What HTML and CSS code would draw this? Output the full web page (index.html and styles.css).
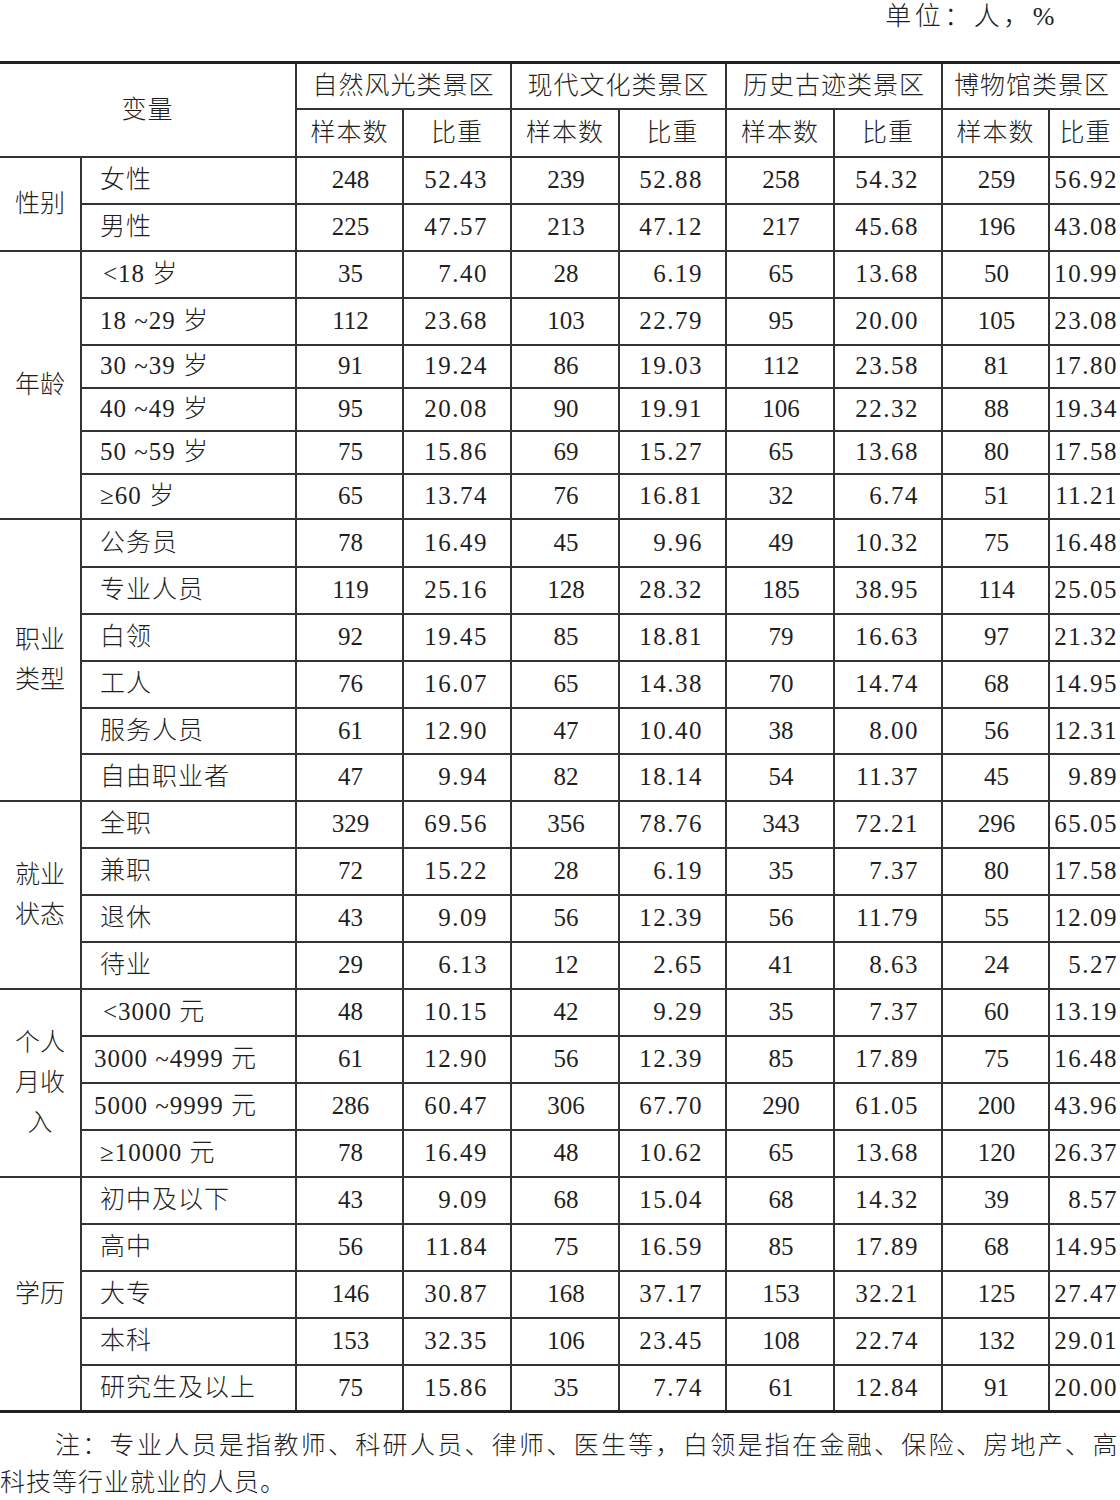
FILE: index.html
```html
<!DOCTYPE html>
<html lang="zh-CN">
<head>
<meta charset="utf-8">
<title>样本特征</title>
<link rel="stylesheet" href="styles.css">
</head>
<body>
<div class="page">
  <div class="unit">单位：人，%</div>
  <table class="data">
    <colgroup>
      <col class="c-grp"><col class="c-lbl">
      <col class="c-a"><col class="c-b">
      <col class="c-b"><col class="c-a">
      <col class="c-b"><col class="c-b">
      <col class="c-a"><col class="c-last">
    </colgroup>
    <thead>
      <tr class="h1">
        <th colspan="2" rowspan="2" class="hvar">变量</th>
        <th colspan="2">自然风光类景区</th>
        <th colspan="2">现代文化类景区</th>
        <th colspan="2">历史古迹类景区</th>
        <th colspan="2" class="last">博物馆类景区</th>
      </tr>
      <tr class="h2">
        <th>样本数</th><th>比重</th>
        <th>样本数</th><th>比重</th>
        <th>样本数</th><th>比重</th>
        <th>样本数</th><th class="last">比重</th>
      </tr>
    </thead>
    <tbody>
      <tr><td class="grp" rowspan="2">性别</td><td class="lbl">女性</td><td class="n">248</td><td class="r">52.43</td><td class="n">239</td><td class="r">52.88</td><td class="n">258</td><td class="r">54.32</td><td class="n">259</td><td class="r last">56.92</td></tr>
      <tr><td class="lbl">男性</td><td class="n">225</td><td class="r">47.57</td><td class="n">213</td><td class="r">47.12</td><td class="n">217</td><td class="r">45.68</td><td class="n">196</td><td class="r last">43.08</td></tr>

      <tr><td class="grp" rowspan="6">年龄</td><td class="lbl lt">&lt;18 岁</td><td class="n">35</td><td class="r">7.40</td><td class="n">28</td><td class="r">6.19</td><td class="n">65</td><td class="r">13.68</td><td class="n">50</td><td class="r last">10.99</td></tr>
      <tr><td class="lbl">18 ~29 岁</td><td class="n">112</td><td class="r">23.68</td><td class="n">103</td><td class="r">22.79</td><td class="n">95</td><td class="r">20.00</td><td class="n">105</td><td class="r last">23.08</td></tr>
      <tr class="short"><td class="lbl">30 ~39 岁</td><td class="n">91</td><td class="r">19.24</td><td class="n">86</td><td class="r">19.03</td><td class="n">112</td><td class="r">23.58</td><td class="n">81</td><td class="r last">17.80</td></tr>
      <tr class="short"><td class="lbl">40 ~49 岁</td><td class="n">95</td><td class="r">20.08</td><td class="n">90</td><td class="r">19.91</td><td class="n">106</td><td class="r">22.32</td><td class="n">88</td><td class="r last">19.34</td></tr>
      <tr class="short"><td class="lbl">50 ~59 岁</td><td class="n">75</td><td class="r">15.86</td><td class="n">69</td><td class="r">15.27</td><td class="n">65</td><td class="r">13.68</td><td class="n">80</td><td class="r last">17.58</td></tr>
      <tr class="mid"><td class="lbl">≥60 岁</td><td class="n">65</td><td class="r">13.74</td><td class="n">76</td><td class="r">16.81</td><td class="n">32</td><td class="r">6.74</td><td class="n">51</td><td class="r last">11.21</td></tr>

      <tr class="tall"><td class="grp" rowspan="6">职业类型</td><td class="lbl">公务员</td><td class="n">78</td><td class="r">16.49</td><td class="n">45</td><td class="r">9.96</td><td class="n">49</td><td class="r">10.32</td><td class="n">75</td><td class="r last">16.48</td></tr>
      <tr><td class="lbl">专业人员</td><td class="n">119</td><td class="r">25.16</td><td class="n">128</td><td class="r">28.32</td><td class="n">185</td><td class="r">38.95</td><td class="n">114</td><td class="r last">25.05</td></tr>
      <tr><td class="lbl">白领</td><td class="n">92</td><td class="r">19.45</td><td class="n">85</td><td class="r">18.81</td><td class="n">79</td><td class="r">16.63</td><td class="n">97</td><td class="r last">21.32</td></tr>
      <tr><td class="lbl">工人</td><td class="n">76</td><td class="r">16.07</td><td class="n">65</td><td class="r">14.38</td><td class="n">70</td><td class="r">14.74</td><td class="n">68</td><td class="r last">14.95</td></tr>
      <tr class="mid2"><td class="lbl">服务人员</td><td class="n">61</td><td class="r">12.90</td><td class="n">47</td><td class="r">10.40</td><td class="n">38</td><td class="r">8.00</td><td class="n">56</td><td class="r last">12.31</td></tr>
      <tr><td class="lbl">自由职业者</td><td class="n">47</td><td class="r">9.94</td><td class="n">82</td><td class="r">18.14</td><td class="n">54</td><td class="r">11.37</td><td class="n">45</td><td class="r last">9.89</td></tr>

      <tr><td class="grp" rowspan="4">就业状态</td><td class="lbl">全职</td><td class="n">329</td><td class="r">69.56</td><td class="n">356</td><td class="r">78.76</td><td class="n">343</td><td class="r">72.21</td><td class="n">296</td><td class="r last">65.05</td></tr>
      <tr><td class="lbl">兼职</td><td class="n">72</td><td class="r">15.22</td><td class="n">28</td><td class="r">6.19</td><td class="n">35</td><td class="r">7.37</td><td class="n">80</td><td class="r last">17.58</td></tr>
      <tr><td class="lbl">退休</td><td class="n">43</td><td class="r">9.09</td><td class="n">56</td><td class="r">12.39</td><td class="n">56</td><td class="r">11.79</td><td class="n">55</td><td class="r last">12.09</td></tr>
      <tr><td class="lbl">待业</td><td class="n">29</td><td class="r">6.13</td><td class="n">12</td><td class="r">2.65</td><td class="n">41</td><td class="r">8.63</td><td class="n">24</td><td class="r last">5.27</td></tr>

      <tr><td class="grp" rowspan="4">个人月收入</td><td class="lbl lt">&lt;3000 元</td><td class="n">48</td><td class="r">10.15</td><td class="n">42</td><td class="r">9.29</td><td class="n">35</td><td class="r">7.37</td><td class="n">60</td><td class="r last">13.19</td></tr>
      <tr><td class="lbl tight">3000 ~4999 元</td><td class="n">61</td><td class="r">12.90</td><td class="n">56</td><td class="r">12.39</td><td class="n">85</td><td class="r">17.89</td><td class="n">75</td><td class="r last">16.48</td></tr>
      <tr><td class="lbl tight">5000 ~9999 元</td><td class="n">286</td><td class="r">60.47</td><td class="n">306</td><td class="r">67.70</td><td class="n">290</td><td class="r">61.05</td><td class="n">200</td><td class="r last">43.96</td></tr>
      <tr><td class="lbl">≥10000 元</td><td class="n">78</td><td class="r">16.49</td><td class="n">48</td><td class="r">10.62</td><td class="n">65</td><td class="r">13.68</td><td class="n">120</td><td class="r last">26.37</td></tr>

      <tr><td class="grp" rowspan="5">学历</td><td class="lbl">初中及以下</td><td class="n">43</td><td class="r">9.09</td><td class="n">68</td><td class="r">15.04</td><td class="n">68</td><td class="r">14.32</td><td class="n">39</td><td class="r last">8.57</td></tr>
      <tr><td class="lbl">高中</td><td class="n">56</td><td class="r">11.84</td><td class="n">75</td><td class="r">16.59</td><td class="n">85</td><td class="r">17.89</td><td class="n">68</td><td class="r last">14.95</td></tr>
      <tr><td class="lbl">大专</td><td class="n">146</td><td class="r">30.87</td><td class="n">168</td><td class="r">37.17</td><td class="n">153</td><td class="r">32.21</td><td class="n">125</td><td class="r last">27.47</td></tr>
      <tr><td class="lbl">本科</td><td class="n">153</td><td class="r">32.35</td><td class="n">106</td><td class="r">23.45</td><td class="n">108</td><td class="r">22.74</td><td class="n">132</td><td class="r last">29.01</td></tr>
      <tr><td class="lbl">研究生及以上</td><td class="n">75</td><td class="r">15.86</td><td class="n">35</td><td class="r">7.74</td><td class="n">61</td><td class="r">12.84</td><td class="n">91</td><td class="r last">20.00</td></tr>
    </tbody>
  </table>
  <p class="note"><span class="note-first">注：专业人员是指教师、科研人员、律师、医生等，白领是指在金融、保险、房地产、高</span><br>科技等行业就业的人员。</p>
</div>
</body>
</html>
```

FILE: styles.css
```css
html, body {
  margin: 0;
  padding: 0;
  background: #ffffff;
}

body {
  font-family: "Liberation Serif", "Noto Sans CJK SC", serif;
  color: #1f1f1f;
  font-weight: 300;
}

.page {
  width: 1120px;
  overflow: hidden;
}

.unit {
  height: 34px;
  line-height: 34px;
  font-size: 26px;
  letter-spacing: 3.5px;
  text-align: right;
  padding-right: 62px;
  margin-bottom: 27px;
}

.data {
  width: 1120px;
  table-layout: fixed;
  border-collapse: collapse;
  font-size: 25px;
  border-top: 3px solid #222;
  border-bottom: 3px solid #222;
}

.c-grp { width: 81px; }
.c-lbl { width: 215px; }
.c-a { width: 107px; }
.c-b { width: 108px; }
.c-last { width: 72px; }

.data th,
.data td {
  border: 2px solid #333;
  padding: 0;
  line-height: 1.2;
  vertical-align: middle;
  white-space: nowrap;
}

.data tr > :first-child {
  border-left: none;
}

.data .last {
  border-right: none;
}

.data th {
  font-weight: 300;
  text-align: center;
  letter-spacing: 1px;
}

.h1 { height: 46px; }
.h2 { height: 48px; }

.data tbody tr { height: 47px; }
.data tbody tr.short { height: 43px; }
.data tbody tr.mid { height: 45px; }
.data tbody tr.mid2 { height: 46px; }
.data tbody tr.tall { height: 48px; }

.data td.grp {
  text-align: center;
  white-space: normal;
  line-height: 40px;
  padding: 0 8px;
  border-left: none;
}

.data td.lbl {
  text-align: left;
  padding-left: 18px;
  letter-spacing: 1px;
}

.data td.lbl.lt { padding-left: 21px; }
.data td.lbl.tight { padding-left: 12px; }

.data td.n {
  text-align: center;
  padding-left: 2px;
}

.data td.r {
  text-align: right;
  padding-right: 22px;
  letter-spacing: 1.5px;
}

.data td.r.last {
  padding-right: 3px;
}

.note {
  margin: 14px 0 0 0;
  font-size: 25px;
  line-height: 37px;
  letter-spacing: 1px;
  text-indent: 55px;
  white-space: nowrap;
}

.note-first {
  letter-spacing: 2.3px;
}
```
